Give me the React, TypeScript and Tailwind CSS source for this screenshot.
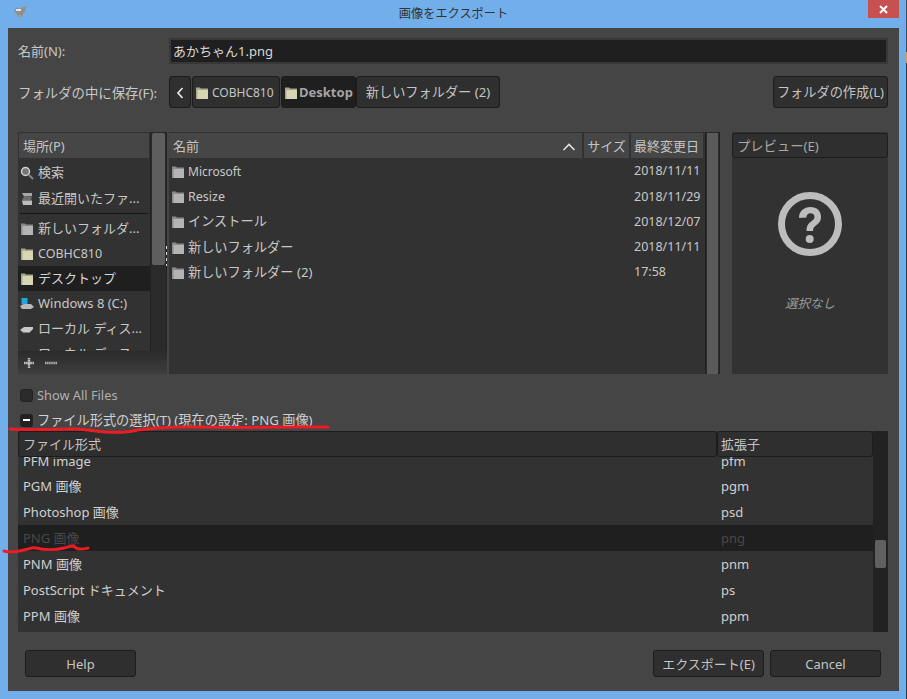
import React from 'react';

const font = { fontFamily: '"Noto Sans", "Noto Sans CJK JP", sans-serif' };

const FolderIcon = ({ tint = 'gray' }: { tint?: 'gray' | 'khaki' }) => {
  const body = tint === 'gray' ? '#b4b4b4' : '#d6d6b4';
  const back = tint === 'gray' ? '#8a8a8a' : '#a8a88a';
  return (
    <svg width="14" height="14" viewBox="0 0 14 14" className="shrink-0">
      <path d="M1 1.500h4l1 1h7V13H1z" fill={back} />
      <rect x="2.500" y="4" width="10.500" height="9" fill={body} />
    </svg>
  );
};

const SearchIcon = () => (
  <svg width="14" height="14" viewBox="0 0 14 14" className="shrink-0">
    <circle cx="5.500" cy="5.500" r="4" fill="#767676" stroke="#d0d0d0" strokeWidth="1.500" />
    <path d="M9 9l4 4" stroke="#8a8a8a" strokeWidth="1.800" />
  </svg>
);

const RecentIcon = () => (
  <svg width="14" height="14" viewBox="0 0 14 14" className="shrink-0">
    <path d="M2 1h10v3l-8 .5z" fill="#a8a8a8" />
    <path d="M4 4.500h8l-1 4-9-.5z" fill="#6e6e6e" />
    <path d="M2 8.500h10v4.500H3z" fill="#bcbcbc" />
  </svg>
);

const WindowsDriveIcon = () => (
  <svg width="14" height="14" viewBox="0 0 14 14" className="shrink-0">
    <rect x="1.500" y="1" width="6" height="6.500" fill="#23a6e0" />
    <path d="M0 9l4-2h7l3 3-3 2H2z" fill="#b9b9b9" />
  </svg>
);

const DriveIcon = () => (
  <svg width="14" height="14" viewBox="0 0 14 14" className="shrink-0">
    <path d="M0 8l4-3h9v2l-3 3H3z" fill="#cacaca" />
    <path d="M0 8l3 2h7v1H3z" fill="#848484" />
  </svg>
);

const places = [
  { icon: <SearchIcon />, label: '検索' },
  { icon: <RecentIcon />, label: '最近開いたファ...' },
];
const places2 = [
  { icon: <FolderIcon />, label: '新しいフォルダ...' },
  { icon: <FolderIcon tint="khaki" />, label: 'COBHC810', cls: 'text-[12.500px]' },
  { icon: <FolderIcon tint="khaki" />, label: 'デスクトップ', active: true },
  { icon: <WindowsDriveIcon />, label: 'Windows 8 (C:)' },
  { icon: <DriveIcon />, label: 'ローカル ディス...' },
];

const files = [
  { name: 'Microsoft', date: '2018/11/11', cls: 'text-[12px]' },
  { name: 'Resize', date: '2018/11/29', cls: 'text-[12.500px]' },
  { name: 'インストール', date: '2018/12/07', cls: 'text-[13.200px]' },
  { name: '新しいフォルダー', date: '2018/11/11', cls: 'text-[13.200px]' },
  { name: '新しいフォルダー (2)', date: '17:58', cls: 'text-[13.200px]' },
];

const formats = [
  { name: 'PGM 画像', ext: 'pgm' },
  { name: 'Photoshop 画像', ext: 'psd' },
  { name: 'PNG 画像', ext: 'png', active: true },
  { name: 'PNM 画像', ext: 'pnm' },
  { name: 'PostScript ドキュメント', ext: 'ps' },
  { name: 'PPM 画像', ext: 'ppm' },
];

const btn = 'rounded-[3px] border border-[#1c1c1c] bg-[#2f2f2f] flex items-center justify-center pt-[2px] text-[#c4c4c4]';

export default function App() {
  return (
    <div style={font} className="relative w-[907px] h-[699px] overflow-hidden bg-[#72aeea] text-[13px] text-[#c8c8c8]">
      {/* title bar */}
      <div className="relative flex h-[28px] items-center justify-center pt-[1px] text-[12.200px] text-[#333]">
        <svg width="14" height="14" viewBox="0 0 14 14" className="absolute left-[13px] top-[5px]">
          <path d="M1 6l3-4 2 2 4-2 3-1-1 5-2 3-1 3H5L4 9z" fill="#8f8f8f" />
          <path d="M3 4h5v2H3z" fill="#e6e6e6" />
          <path d="M6 10h2v2H6z" fill="#c99a55" />
        </svg>
        画像をエクスポート
        <div className="absolute left-[868px] top-0 flex h-[18px] w-[31px] items-center justify-center bg-[#c75050]">
          <svg width="9" height="9" viewBox="0 0 9 9">
            <path d="M1 1l7 7M8 1l-7 7" stroke="#fff" strokeWidth="2" />
          </svg>
        </div>
      </div>

      {/* edge of the window behind */}
      <div className="absolute right-0 top-0 flex h-full w-px flex-col">
        <div className="h-[52px] bg-[#3b4a5a]" />
        <div className="h-[11px] bg-[#e8953a]" />
        <div className="flex-1 bg-[#2c3a48]" />
      </div>

      {/* dialog body */}
      <div className="ml-[8px] flex h-[663px] w-[891px] flex-col bg-[#454545] pl-[10px] pr-[11px]">
        <div className="mt-[10px] flex h-[26px] items-center">
          <div className="w-[151px] pt-[2px]">名前(N):</div>
          <div className="flex h-[26px] w-[719px] items-center border-2 border-[#383838] bg-[#1f1f1f] px-[2px] pt-[1px] text-[#d8d8d8]">あかちゃん1.png</div>
        </div>

        <div className="mt-[12px] flex h-[32px] items-center">
          <div className="w-[151px] pt-[2px] text-[13.400px]">フォルダの中に保存(F):</div>
          <div className="flex h-[32px]">
            <div className={`${btn} w-[22px]`}>
              <svg width="8" height="12" viewBox="0 0 8 12">
                <path d="M6.500 1L2 6l4.500 5" fill="none" stroke="#e0e0e0" strokeWidth="1.800" />
              </svg>
            </div>
            <div className={`${btn} ml-px w-[88px] !justify-start gap-[3px] pl-[2px]`}>
              <FolderIcon tint="khaki" />
              <span className="text-[12px]">COBHC810</span>
            </div>
            <div className="ml-px flex w-[75px] items-center gap-[1px] rounded-[3px] border border-[#1c1c1c] bg-[#1f1f1f] pl-[2px] pt-[2px] font-bold text-[#a4a4a4]">
              <FolderIcon tint="khaki" />
              Desktop
            </div>
            <div className={`${btn} w-[144px] text-[13.200px]`}>新しいフォルダー (2)</div>
          </div>
          <div className={`${btn} ml-auto h-[32px] w-[115px] text-[13.200px]`}>フォルダの作成(L)</div>
        </div>

        {/* panes */}
        <div className="relative mt-[24px] flex h-[242px]">
          <div className="flex w-[149px] flex-col overflow-hidden bg-[#323232]">
            <div className="flex min-h-0 flex-1">
              <div className="relative h-[219px] w-[132px] overflow-hidden">
                <div className="mx-px mt-px flex h-[25px] items-center bg-[#464646] px-[4px] pt-[2px] text-[#c4c4c4]">場所(P)</div>
                <div className="mt-px">
                  {places.map((p) => (
                    <div key={p.label} className="flex h-[26px] items-center gap-[4px] pl-[2px] pt-[2px] whitespace-nowrap">
                      {p.icon}
                      {p.label}
                    </div>
                  ))}
                </div>
                <div className="mx-[2px] mt-[2px] mb-[2px] h-px bg-[#151515]" />
                {places2.map((p) => (
                  <div key={p.label} className={`flex h-[25px] items-center gap-[4px] pl-[2px] pt-[1px] whitespace-nowrap ${p.active ? 'bg-[#1f1f1f] text-[#d8d8d8]' : ''} ${p.cls ?? ''}`}>
                    {p.icon}
                    {p.label}
                  </div>
                ))}
                <div className="flex h-[25px] items-center gap-[4px] pl-[2px] pt-[1px] whitespace-nowrap">
                  <DriveIcon />
                  ローカル ディス...
                </div>
              </div>
              <div className="h-full w-[17px] border-x border-[#222] bg-[#2a2a2a] px-px pt-px">
                <div className="h-[132px] rounded-[2px] bg-[#5e5e5e]" />
              </div>
            </div>
            <div className="flex h-[23px] items-center gap-[10px] bg-gradient-to-b from-[#2b2b2b] to-[#3e3e3e] pl-[5px]">
              <svg width="12" height="12" viewBox="0 0 12 12">
                <path d="M6 1v10M1 6h10" stroke="#c8c8c8" strokeWidth="2.400" strokeDasharray="1.500 0.600" />
              </svg>
              <svg width="12" height="4" viewBox="0 0 12 4">
                <path d="M0 2h12" stroke="#b0b0b0" strokeWidth="2.400" strokeDasharray="1.500 0.600" />
              </svg>
            </div>
          </div>

          {/* pane grip */}
          <div className="absolute left-[148px] top-[114px] z-10 flex flex-col gap-[3px]">
            <div className="h-[3px] w-px bg-[#d8d8d8]" />
            <div className="h-[3px] w-px bg-[#d8d8d8]" />
            <div className="h-[3px] w-px bg-[#d8d8d8]" />
            <div className="h-[2px] w-px bg-[#d8d8d8]" />
          </div>

          <div className="ml-[2px] flex w-[551px] bg-[#323232]">
            <div className="w-[536px]">
              <div className="flex h-[26px] gap-[2px] pt-px">
                <div className="flex w-[413px] items-center justify-between bg-[#464646] px-[4px] pt-[2px] text-[#c4c4c4]">
                  名前
                  <svg width="14" height="8" viewBox="0 0 14 8" className="mr-[2px]">
                    <path d="M1.500 7L7 1.500 12.500 7" fill="none" stroke="#e0e0e0" strokeWidth="1.600" />
                  </svg>
                </div>
                <div className="flex w-[45px] items-center justify-center bg-[#464646] pt-[2px] text-[#c4c4c4]">サイズ</div>
                <div className="flex w-[72px] items-center bg-[#464646] pl-[3px] pt-[2px] text-[#c4c4c4]">最終変更日</div>
              </div>
              <div>
                {files.map((f) => (
                  <div key={f.name} className="flex h-[25.300px] items-center pt-[2px]">
                    <div className={`flex w-[465px] items-center gap-[3px] pl-[2px] ${f.cls}`}>
                      <FolderIcon />
                      {f.name}
                    </div>
                    <span className="text-[12.500px]">{f.date}</span>
                  </div>
                ))}
              </div>
            </div>
            <div className="w-[15px] border-x border-[#222] bg-[#2a2a2a] px-px pt-px">
              <div className="h-[241px] bg-[#5a5a5a]" />
            </div>
          </div>

          <div className="ml-[12px] flex w-[156px] flex-col items-center bg-[#323232]">
            <div className="mt-px flex h-[25px] w-full items-center rounded-[3px] border border-[#1c1c1c] bg-[#2f2f2f] px-[4px] pt-[2px] text-[13.300px] text-[#a8a8a8]">プレビュー(E)</div>
            <svg width="64" height="64" viewBox="0 0 64 64" className="mt-[34px]">
              <circle cx="32" cy="32" r="28.500" fill="none" stroke="#bdbdbd" strokeWidth="7" />
              <path d="M21 26c0-7 5-11 11.500-11S43 19 43 25c0 4.500-2.500 6.500-5 8.500-2 1.500-3 2.500-3 5.500h-6.500c0-5 1.500-7 4.500-9.500 2-1.500 3.500-2.500 3.500-4.500 0-2.200-1.500-3.800-4-3.800-2.800 0-4 2-4.200 4.300z" fill="#bdbdbd" />
              <circle cx="31.700" cy="47" r="4" fill="#bdbdbd" />
            </svg>
            <div className="mt-[39px] text-[12.500px] italic text-[#9a9a9a]">選択なし</div>
          </div>
        </div>

        {/* options */}
        <div className="mt-[13px] flex h-[16px] items-center gap-[4px] text-[12.800px] text-[#b0b0b0]">
          <div className="ml-[2px] h-[13px] w-[13px] rounded-[3px] border border-[#222] bg-[#2a2a2a]" />
          <span className="pt-[2px]">Show All Files</span>
        </div>
        <div className="mt-[9px] flex h-[16px] items-center gap-[4px] text-[13.200px] text-[#d0d0d0]">
          <div className="ml-[2px] flex h-[13px] w-[13px] items-center justify-center rounded-[3px] bg-[#222]">
            <div className="h-[2.500px] w-[7px] bg-white" />
          </div>
          <span className="pt-[2px]">ファイル形式の選択(T) (現在の設定: PNG 画像)</span>
        </div>

        {/* format table */}
        <div className="mt-[3px] flex h-[201px] w-[870px] overflow-hidden">
          <div className="relative w-[855px] bg-[#323232]">
            <div className="absolute inset-x-0 top-0 z-10 flex h-[26px]">
              <div className="flex w-[699px] items-center rounded-[3px] border border-[#1c1c1c] bg-[#2f2f2f] px-[4px] pt-[2px] text-[#c4c4c4]">ファイル形式</div>
              <div className="flex w-[156px] items-center rounded-[3px] border border-[#1c1c1c] bg-[#2f2f2f] px-[3px] pt-[2px] text-[#c4c4c4]">拡張子</div>
            </div>
            <div className="pt-[16px]">
              <div className="flex h-[26px] items-center pt-[3px] text-[#d0d0d0]">
                <div className="w-[703px] pl-[5px]">PFM image</div>
                pfm
              </div>
              {formats.map((f) => (
                <div key={f.ext} className={`flex h-[26px] items-center pt-[2px] ${f.active ? 'bg-[#1f1f1f] text-[#484848]' : 'text-[#d0d0d0]'}`}>
                  <div className="w-[703px] pl-[5px]">{f.name}</div>
                  {f.ext}
                </div>
              ))}
            </div>
          </div>
          <div className="w-[15px] bg-[#222] px-[2px] pt-[109px]">
            <div className="h-[28px] rounded-[2px] bg-[#606060]" />
          </div>
        </div>

        {/* buttons */}
        <div className="mt-[18px] flex h-[27px] items-center px-[7px]">
          <div className={`${btn} h-[27px] w-[111px]`}>Help</div>
          <div className={`${btn} ml-auto h-[27px] w-[111px]`}>エクスポート(E)</div>
          <div className={`${btn} ml-[6px] h-[27px] w-[111px]`}>Cancel</div>
        </div>
      </div>

      {/* red hand-drawn marks */}
      <svg width="907" height="699" className="pointer-events-none absolute inset-0 z-20">
        <path d="M10 429c20 1 50 0 65 0 12 0 20 3 30 3 15 1 25 0 33-2 15-2 25-3 50-3 30 0 60 1 85 0 25 0 35 0 55 0" fill="none" stroke="#ed1c24" strokeWidth="3" strokeLinecap="round" />
        <path d="M4 551c6 2 12 1 20-1 6-1 8-3 12-2 8 2 20 2 28 0 4-1 6-2 9-2 3 1 3 3 7 3 3 0 6 0 8-1" fill="none" stroke="#ed1c24" strokeWidth="3" strokeLinecap="round" />
      </svg>
    </div>
  );
}
